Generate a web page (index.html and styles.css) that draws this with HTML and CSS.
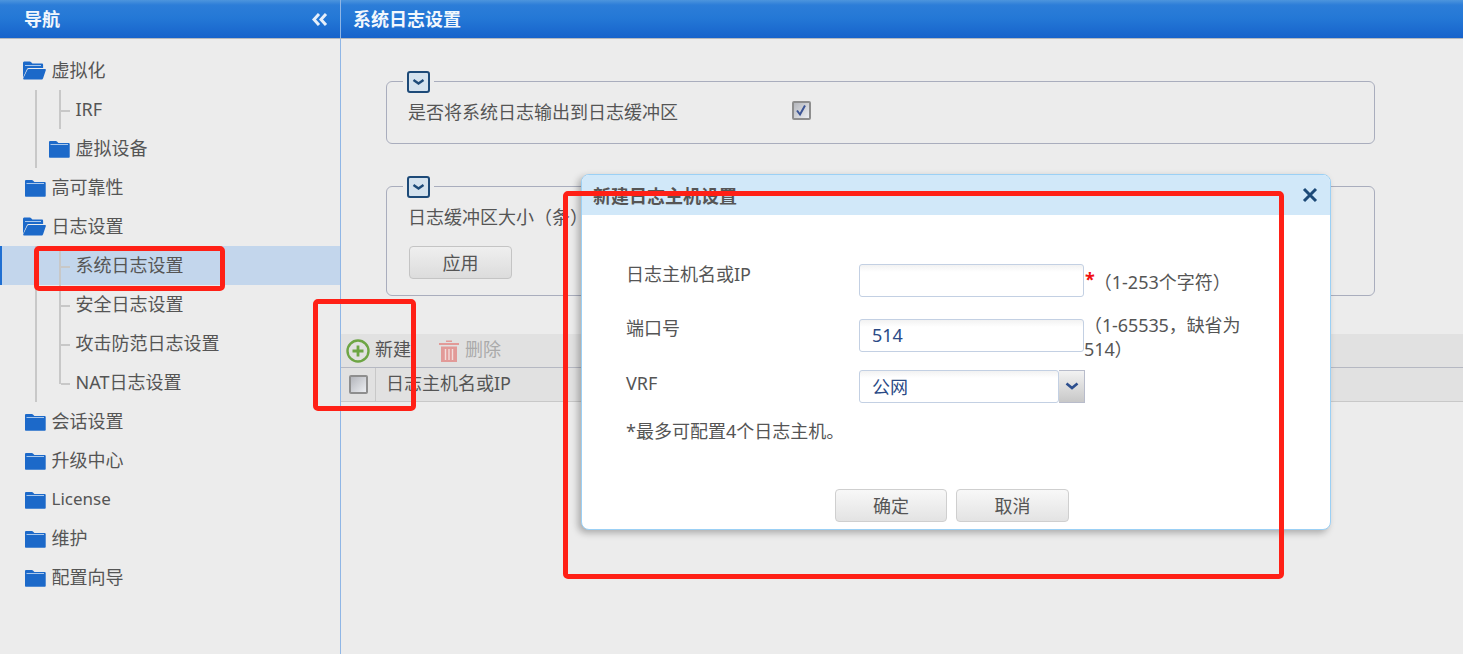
FILE: index.html
```html
<!DOCTYPE html>
<html lang="zh-CN">
<head>
<meta charset="utf-8">
<title>系统日志设置</title>
<link rel="stylesheet" href="styles.css">
</head>
<body>
<svg class="sprite" aria-hidden="true">
  <symbol id="folder" viewBox="0 0 22 18"><path d="M1 17V2.2C1 1.500 1.500 1 2.200 1h5.600c.6 0 1 .3 1.400.8L10.400 3h10.200c.6 0 1.100.5 1.100 1.100V17c0 .5-.3.8-.8.8H1.800C1.300 17.800 1 17.500 1 17z" fill="#1c69c9"/><path d="M2.500 4.500h17.500" stroke="#a9c8ec" stroke-width="1" fill="none"/></symbol>
  <symbol id="folder-open" viewBox="0 0 23 19"><path d="M0 17V2C0 1 .7.500 1.500.500h5.300c.6 0 1 .3 1.400.8L9.400 2.500h9.400c.8 0 1.300.5 1.300 1.300V7H5.500c-.7 0-1.200.3-1.500 1L1.400 13.500" fill="#1c69c9"/><path d="M2 4.500h16" stroke="#a9c8ec" fill="none"/><path d="M1 18.500c-.8 0-1-.5-.7-1.200L4.300 9c.3-.6.7-1 1.400-1h16.300c.8 0 1.100.5.800 1.200l-2.700 8c-.3.8-.8 1.300-1.600 1.300z" fill="#1c69c9"/></symbol>
  <symbol id="toggle" viewBox="0 0 23 22"><rect x="1" y="1" width="21" height="20" rx="2" fill="#d4e2ee" stroke="#1d4a78" stroke-width="2"/><path d="M6.500 9l5 3.500 5-3.500" fill="none" stroke="#1d4a78" stroke-width="2.400"/></symbol>
</svg>

<header class="topbar">
  <div class="topbar-nav">
    <span class="topbar-title">导航</span>
    <svg class="collapse" viewBox="0 0 16 13" width="16" height="13" aria-hidden="true"><path d="M7 1L2 6.500 7 12M14 1L9 6.500 14 12" fill="none" stroke="#e6effa" stroke-width="3"/></svg>
  </div>
  <div class="topbar-page"><span class="topbar-title">系统日志设置</span></div>
</header>

<div class="main">
  <nav class="sidebar">
    <div class="row top"><svg class="ico-open"><use href="#folder-open"/></svg><span>虚拟化</span></div>
    <div class="row leaf"><span>IRF</span></div>
    <div class="row sub"><svg class="ico"><use href="#folder"/></svg><span>虚拟设备</span></div>
    <div class="row top"><svg class="ico"><use href="#folder"/></svg><span>高可靠性</span></div>
    <div class="row top"><svg class="ico-open"><use href="#folder-open"/></svg><span>日志设置</span></div>
    <div class="row leaf selected"><span>系统日志设置</span></div>
    <div class="row leaf"><span>安全日志设置</span></div>
    <div class="row leaf"><span>攻击防范日志设置</span></div>
    <div class="row leaf leaf-last"><span>NAT日志设置</span></div>
    <div class="row top"><svg class="ico"><use href="#folder"/></svg><span>会话设置</span></div>
    <div class="row top"><svg class="ico"><use href="#folder"/></svg><span>升级中心</span></div>
    <div class="row top row-latin"><svg class="ico"><use href="#folder"/></svg><span>License</span></div>
    <div class="row top"><svg class="ico"><use href="#folder"/></svg><span>维护</span></div>
    <div class="row top"><svg class="ico"><use href="#folder"/></svg><span>配置向导</span></div>
  </nav>

  <main class="content">
    <section class="panel panel-a">
      <svg class="panel-toggle"><use href="#toggle"/></svg>
      <div class="panel-line">
        <span class="panel-label">是否将系统日志输出到日志缓冲区</span>
        <span class="check check-on">
          <svg viewBox="0 0 18 19" width="18" height="19" aria-hidden="true"><path d="M5 9.500l3 4 5-9" fill="none" stroke="#3c5596" stroke-width="2"/></svg>
        </span>
      </div>
    </section>

    <section class="panel panel-b">
      <svg class="panel-toggle"><use href="#toggle"/></svg>
      <div class="panel-text">日志缓冲区大小（条）</div>
      <button class="btn btn-apply">应用</button>
    </section>

    <div class="toolbar">
      <span class="tool">
        <svg viewBox="0 0 24 24" width="24" height="24" aria-hidden="true"><circle cx="12" cy="12" r="10.500" fill="none" stroke="#6da544" stroke-width="2.400"/><path d="M12 6.500v11M6.500 12h11" stroke="#6da544" stroke-width="2.800"/></svg>
        <span class="tool-text">新建</span>
      </span>
      <span class="tool tool-off">
        <svg viewBox="0 0 20 24" width="20" height="24" aria-hidden="true"><path d="M7 3V1.500h6V3M0 4h20v2H0zM2 7.500h16V23H2z" fill="#e29a98"/><path d="M6.500 10v11M10 10v11M13.500 10v11" stroke="#f3dcdb" stroke-width="1.400"/></svg>
        <span class="tool-text">删除</span>
      </span>
    </div>
    <div class="thead">
      <div class="thead-check"><span class="check check-off"></span></div>
      <div class="thead-cell">日志主机名或IP</div>
    </div>
  </main>
</div>

<div class="dialog">
  <div class="dialog-head">
    <span class="dialog-title">新建日志主机设置</span>
    <svg class="dialog-close" viewBox="0 0 16 16" width="16" height="16" aria-hidden="true"><path d="M2 2l12 12M14 2L2 14" stroke="#1d4a78" stroke-width="3"/></svg>
  </div>
  <div class="dialog-body">
    <div class="form-row">
      <label class="form-label">日志主机名或IP</label>
      <span class="input"></span>
      <span class="star">*</span>
      <span class="hint hint-one">（1-253个字符）</span>
    </div>
    <div class="form-row form-row-port">
      <label class="form-label">端口号</label>
      <span class="input">514</span>
      <span class="hint hint-two">（1-65535，缺省为514）</span>
    </div>
    <div class="form-row form-row-vrf">
      <label class="form-label">VRF</label>
      <span class="select">
        <span class="select-value">公网</span>
        <span class="select-arrow"><svg viewBox="0 0 14 9" width="14" height="9" aria-hidden="true"><path d="M1.500 1.500L7 6l5.500-4.500" fill="none" stroke="#2d4f8e" stroke-width="2.600"/></svg></span>
      </span>
    </div>
    <p class="note">*最多可配置4个日志主机。</p>
  </div>
  <div class="dialog-foot">
    <button class="btn btn-dialog">确定</button>
    <button class="btn btn-dialog btn-cancel">取消</button>
  </div>
</div>

<div class="mark mark-a"></div>
<div class="mark mark-b"></div>
<div class="mark mark-c"></div>
</body>
</html>
```

FILE: styles.css
```css
* { box-sizing: border-box; }

html, body {
  margin: 0;
  height: 654px;
  overflow: hidden;
}

body {
  display: flex;
  flex-direction: column;
  background: #ececec;
  color: #555;
  font-family: "Noto Sans", "Noto Sans CJK SC", sans-serif;
  font-size: 18px;
  line-height: 24px;
  position: relative;
}

.sprite { display: none; }

/* top bar */
.topbar {
  display: flex;
  flex: none;
  height: 39px;
  border-bottom: 1px solid #b4b8bf;
  background: linear-gradient(#4d95dd 0, #2c7dd8 5px, #2478d6 18px, #1763cb 100%);
}

.topbar-nav {
  display: flex;
  align-items: center;
  justify-content: space-between;
  width: 341px;
  padding: 0 12px 0 24px;
  border-right: 1px solid #8fb6e6;
}

.topbar-page {
  display: flex;
  align-items: center;
  padding-left: 12px;
}

.topbar-title {
  color: #f2f7fd;
  font-weight: 700;
  font-size: 18px;
}

/* sidebar tree */
.main {
  display: flex;
  flex: 1;
  min-height: 0;
}

.sidebar {
  flex: none;
  width: 341px;
  padding-top: 12px;
  border-right: 1px solid #8fb6e6;
}

.row {
  display: flex;
  align-items: center;
  height: 39px;
  background-repeat: no-repeat;
}

.row span { margin: -2px 0 0 -0.5px; }

.top { padding-left: 24px; gap: 6px; }
.top .ico-open { margin-left: -1px; }
.row-latin span { font-size: 17px; }

.ico { width: 22px; height: 18px; flex: none; }
.ico-open { width: 23px; height: 19px; flex: none; }

.sub {
  padding-left: 48px;
  gap: 6px;
  background-image: linear-gradient(#c8c8c8, #c8c8c8);
  background-position: 35px 0;
  background-size: 2px 100%;
}

.leaf {
  padding-left: 76px;
  background-image:
    linear-gradient(#c8c8c8, #c8c8c8),
    linear-gradient(#c8c8c8, #c8c8c8),
    linear-gradient(#c8c8c8, #c8c8c8);
  background-position: 35px 0, 59px 0, 61px 20px;
  background-size: 2px 100%, 2px 100%, 9px 2px;
}

.leaf-last {
  background-size: 2px 100%, 2px 21px, 9px 2px;
}

.selected {
  background-color: #c3d6ec;
  box-shadow: inset 2px 0 0 #1f6fd2;
}

/* content */
.content {
  flex: 1;
  min-width: 0;
  padding-top: 42px;
}

.panel {
  position: relative;
  margin: 0 88px 0 45px;
  border: 1px solid #a9adbd;
  border-radius: 6px;
}

.panel-a { height: 63px; }

.panel-b {
  height: 110px;
  margin-top: 42px;
  padding: 18px 0 0 21px;
}

.panel-toggle {
  position: absolute;
  left: 16px;
  top: -11px;
  width: 31px;
  height: 22px;
  padding: 0 4px;
  background: #ececec;
}

.panel-line {
  display: flex;
  align-items: center;
  padding: 18px 0 0 21px;
}

.panel-label { width: 384px; }

.check {
  display: block;
  width: 19px;
  height: 19px;
  border: 2px solid #8e8e8e;
  border-radius: 2px;
  background: linear-gradient(135deg, #b4b6bc, #eceef2);
}

.check svg {
  display: block;
  margin: -2px;
}

.check-on { margin-top: -3px; }

.panel-text { height: 24px; }

.btn {
  display: block;
  border: 1px solid #cfcfcf;
  border-radius: 4px;
  background: linear-gradient(#f8f8f8, #e3e3e3);
  color: #555;
  font: inherit;
  padding: 0;
}

.btn-apply {
  width: 103px;
  height: 33px;
  margin: 17px 0 0 1px;
  border-color: #c4c4c4;
  background: linear-gradient(#efefef, #dcdcdc);
}

.toolbar {
  display: flex;
  align-items: center;
  gap: 28px;
  height: 33px;
  margin-top: 38px;
  padding-left: 5px;
  background: #e1e1e1;
}

.tool {
  display: flex;
  align-items: center;
  gap: 5px;
  color: #555;
}

.tool-text { margin-top: -3px; }

.tool-off { gap: 6px; color: #aaa; }

.thead {
  display: flex;
  height: 35px;
  border-top: 1px solid #b5b8c2;
  border-bottom: 1px solid #c8c8c8;
  background: #e1e1e1;
}

.thead-check {
  display: flex;
  align-items: center;
  width: 35px;
  padding-left: 8px;
  border-right: 1px solid #c8c8c8;
}

.thead-cell { padding: 3px 0 0 10px; }

/* dialog */
.dialog {
  position: absolute;
  left: 581px;
  top: 174px;
  width: 750px;
  height: 356px;
  display: flex;
  flex-direction: column;
  border: 1px solid #9bd0f5;
  border-radius: 8px;
  background: #fff;
  box-shadow: -3px 3px 7px rgba(0, 0, 0, 0.28);
}

.dialog-head {
  display: flex;
  align-items: center;
  justify-content: space-between;
  flex: none;
  height: 40px;
  padding: 2px 12px 0 11px;
  border-radius: 7px 7px 0 0;
  background: #d1e8f9;
}

.dialog-title {
  color: #555;
  font-weight: 700;
}

.dialog-close { margin-top: -2px; }

.dialog-body { padding: 49px 0 0 44px; }

.form-row {
  display: flex;
  height: 33px;
}

.form-row-port { margin-top: 22px; }
.form-row-vrf { margin-top: 18px; }

.form-label {
  flex: none;
  width: 233px;
  margin-top: -2px;
}

.form-row-port .form-label { margin-top: -3px; }
.form-row-vrf .form-label { margin-top: 1px; }

.input {
  flex: none;
  width: 225px;
  height: 33px;
  padding: 3px 12px 0;
  border: 1px solid #c3d0e3;
  border-radius: 3px;
  background: linear-gradient(#f2f2f2, #fff 7px);
  color: #2a4a86;
}

.star {
  margin: 3px 0 0 1px;
  color: #f01010;
  font-weight: 700;
}

.hint-one { margin: 6px 0 0 -1px; }

.hint-two {
  width: 170px;
  margin-top: -6px;
  letter-spacing: -0.1px;
}

.select {
  display: flex;
  width: 226px;
  height: 33px;
}

.select-value {
  flex: 1;
  padding: 4px 12px 0;
  border: 1px solid #c3d0e3;
  border-radius: 3px;
  background: linear-gradient(#f2f2f2, #fff 7px);
  color: #2a4a86;
}

.select-arrow {
  display: flex;
  align-items: center;
  justify-content: center;
  flex: none;
  width: 26px;
  border: 1px solid #b8bccb;
  border-left: 0;
  background: linear-gradient(#f2f2f2, #c8c8c8);
}

.note {
  margin: 16px 0 0;
}

.dialog-foot {
  display: flex;
  justify-content: center;
  gap: 9px;
  margin-top: auto;
  padding: 0 8px 7px 0;
}

.btn-dialog {
  width: 112px;
  height: 33px;
}

.btn-cancel { width: 113px; }

/* red annotations drawn over the screenshot */
.mark {
  position: absolute;
  border: 5px solid #ff2016;
  border-radius: 5px;
  pointer-events: none;
}

.mark-a { left: 34px; top: 246px; width: 191px; height: 45px; }
.mark-b { left: 313px; top: 299px; width: 103px; height: 112px; }
.mark-c { left: 563px; top: 191px; width: 721px; height: 388px; }
```
